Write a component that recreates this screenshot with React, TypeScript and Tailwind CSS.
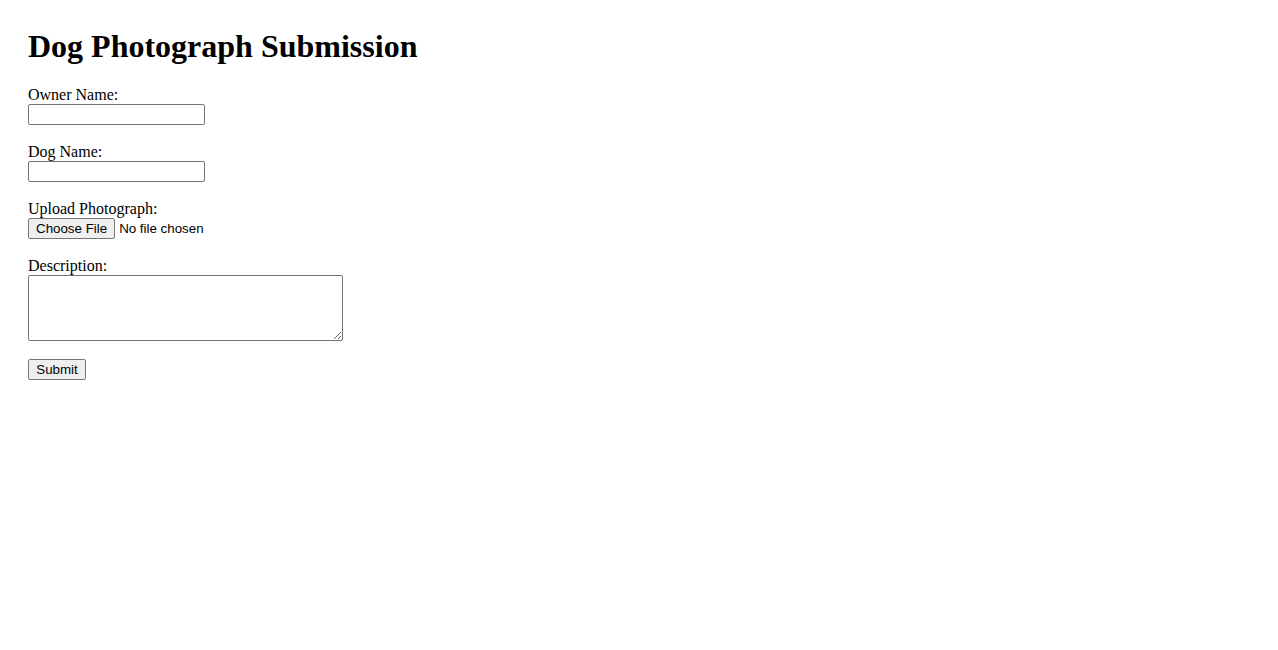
import React from 'react';

export default function App() {
  const fieldBox = 'block border border-[#767676] rounded-[2px] bg-white';

  return (
    <div className="min-h-screen bg-white text-black font-['Liberation_Serif',serif] px-[28px] pt-[28px]">
      <h1 className="text-[32px] font-bold leading-[37px] mb-[21px]">Dog Photograph Submission</h1>

      <form className="flex flex-col items-start text-[16px]" onSubmit={e => e.preventDefault()}>
        {/* Owner */}
        <label htmlFor="owner" className="block leading-[18px]">Owner Name:</label>
        <input id="owner" type="text" className={`${fieldBox} w-[177px] h-[21px] px-[2px] text-[13.33px] font-['Liberation_Sans',sans-serif]`} />

        {/* Dog */}
        <label htmlFor="dog" className="block leading-[18px] mt-[18px]">Dog Name:</label>
        <input id="dog" type="text" className={`${fieldBox} w-[177px] h-[21px] px-[2px] text-[13.33px] font-['Liberation_Sans',sans-serif]`} />

        {/* Photo */}
        <label htmlFor="photo" className="block leading-[18px] mt-[18px]">Upload Photograph:</label>
        <input
          id="photo"
          type="file"
          accept="image/*"
          className="block h-[21px] w-[253px] text-[13.33px] leading-[15px] font-['Liberation_Sans',sans-serif] text-black file:h-[21px] file:mr-[4px] file:px-[7px] file:py-[1px] file:bg-[#efefef] file:border file:border-[#767676] file:rounded-[2px] file:text-black file:text-[13.33px]"
        />

        {/* Description */}
        <label htmlFor="desc" className="block leading-[18px] mt-[18px]">Description:</label>
        <textarea id="desc" className={`${fieldBox} w-[315px] h-[66px] p-[2px] text-[13.33px] font-['Liberation_Mono',monospace]`} />

        <button
          type="submit"
          className="mt-[18px] h-[21px] w-[58px] bg-[#efefef] border border-[#767676] rounded-[2px] text-[13.33px] leading-[15px] font-['Liberation_Sans',sans-serif]"
        >
          Submit
        </button>
      </form>
    </div>
  );
}
